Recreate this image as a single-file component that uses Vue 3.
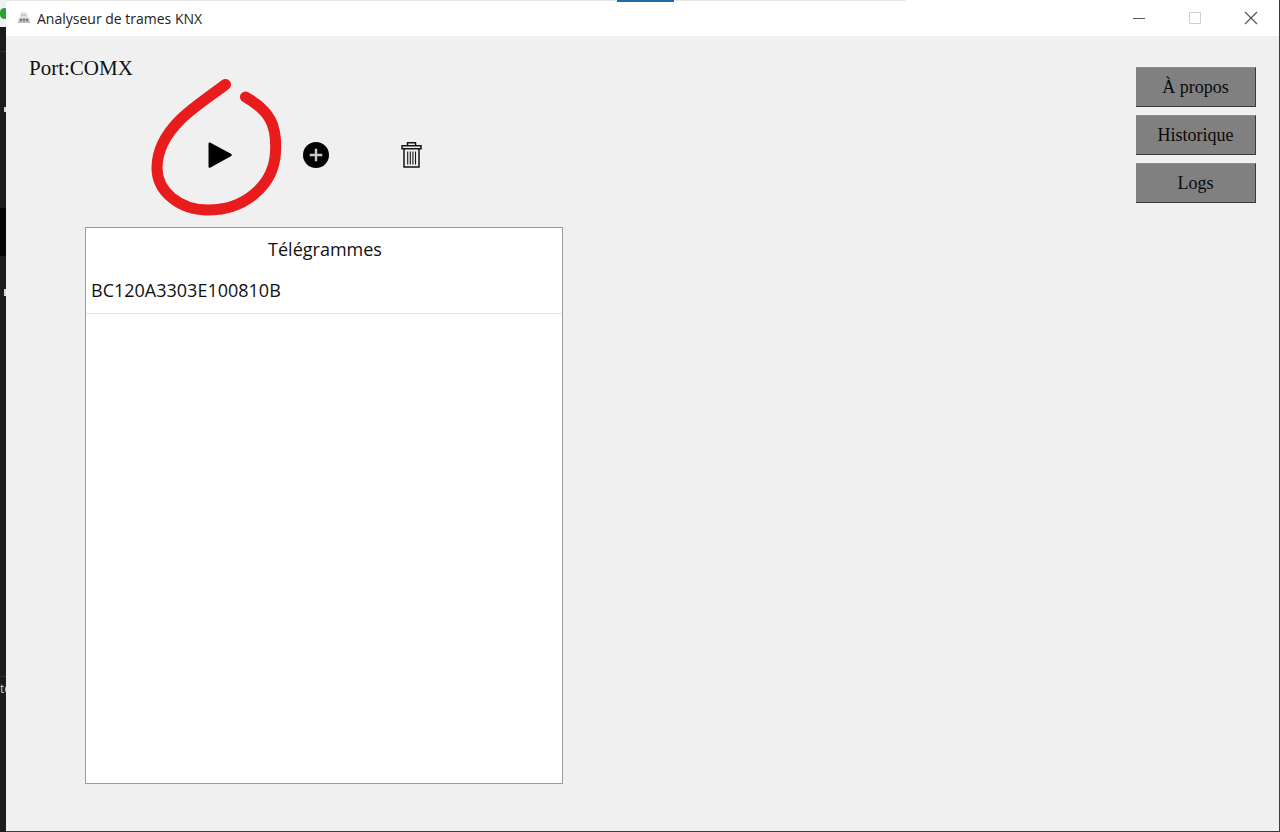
<script setup>
import { ref } from 'vue'

const port = ref('COMX')
const telegrams = ref(['BC120A3303E100810B'])
const menu = ['À propos', 'Historique', 'Logs']
</script>

<template>
  <div class="desktop">
    <div class="backdrop" aria-hidden="true">
      <i class="backdrop-top"></i>
      <i class="green-dot"></i>
      <i class="shade"></i>
      <i class="speck speck-a"></i>
      <i class="speck speck-b"></i>
      <i class="rule rule-a"></i>
      <i class="rule rule-b"></i>
      <span class="behind">to</span>
    </div>

    <main class="window">
      <header class="titlebar">
        <i class="tab-track"></i>
        <i class="tab-active"></i>
        <svg class="app-icon" viewBox="0 0 12 14" aria-hidden="true">
          <path d="M3 1h5l2 3v4H2V4z" fill="#dfe3e6" />
          <path d="M3 3h5v2H3z" fill="#c3c9ce" />
          <path d="M1 7h10l1 5H0z" fill="#b9bdc0" />
          <path d="M2 8h2v2H2zM5 8h2v2H5zM8 8h2v2H8z" fill="#74797d" />
        </svg>
        <h1 class="title">Analyseur de trames KNX</h1>
        <div class="controls">
          <button type="button" aria-label="Réduire">
            <svg viewBox="0 0 14 14"><path d="M1 7.500h12" stroke="#555" /></svg>
          </button>
          <button type="button" aria-label="Agrandir" disabled>
            <svg viewBox="0 0 14 14"><path d="M1.500 1.500h11v11h-11z" stroke="#cfcfcf" /></svg>
          </button>
          <button type="button" aria-label="Fermer">
            <svg viewBox="0 0 14 14"><path d="M1 1l12 12M13 1L1 13" stroke="#555" stroke-width="1.200" /></svg>
          </button>
        </div>
      </header>

      <div class="content">
        <section class="left">
          <p class="port">Port:{{ port }}</p>
          <div class="toolbar">
            <button type="button" aria-label="Démarrer">
              <svg viewBox="0 0 28 28">
                <path d="M4.500 1.700L25.300 13Q26.500 14 25.300 15L4.500 26.600Q2.500 27.300 2.500 25.500V3Q2.500 1 4.500 1.700z" fill="#000" />
              </svg>
            </button>
            <button type="button" aria-label="Ajouter">
              <svg viewBox="0 0 28 28">
                <circle cx="14" cy="14" r="13" fill="#000" />
                <path d="M14 7.700v12.600M7.700 14h12.600" stroke="#c9c9c9" stroke-width="2.400" />
              </svg>
            </button>
            <button type="button" aria-label="Supprimer">
              <svg viewBox="0 0 28 28" fill="none" stroke="#151515">
                <path d="M9.500 4V1.700h8V4" stroke-width="1.500" />
                <path d="M4 4.700h19v3H4z" stroke-width="1.500" />
                <path d="M6 7.700V26h15V7.700" stroke-width="1.500" />
                <path d="M9.700 10.500v13M12.300 10.500v13M14.900 10.500v13M17.500 10.500v13" stroke-width="1.100" />
              </svg>
            </button>
            <svg class="marker" viewBox="0 0 140 150" aria-hidden="true">
              <path
                d="M79.500 14.500C63 27 47 37 34 50C20 64 11 79 11 98C11 121 33 140 62 140C99 140 128 115 129.500 82C131 55 124 41 99.500 27"
                fill="none" stroke="#e81c1c" stroke-width="11" stroke-linecap="round" stroke-linejoin="round"
              />
            </svg>
          </div>
          <div class="list">
            <table>
              <thead>
                <tr><th scope="col">Télégrammes</th></tr>
              </thead>
              <tbody>
                <tr v-for="t in telegrams" :key="t"><td>{{ t }}</td></tr>
              </tbody>
            </table>
          </div>
        </section>
        <nav class="menu">
          <button v-for="m in menu" :key="m" type="button">{{ m }}</button>
        </nav>
      </div>
    </main>
  </div>
</template>

<style>
body {
  margin: 0;
}
</style>

<style scoped>
* {
  box-sizing: border-box;
}
.desktop {
  position: relative;
  display: flex;
  min-height: 100vh;
  padding: 0 1px 1px 6px;
  background: #3c3c3c;
}
.backdrop {
  position: absolute;
  inset: 0 auto 0 0;
  width: 6px;
  overflow: hidden;
  background: #1b1c1c;
}
.backdrop i,
.behind {
  position: absolute;
  left: 0;
  width: 6px;
}
.backdrop-top {
  top: 0;
  height: 27px;
  background: #f0f2f0;
}
.backdrop .green-dot {
  top: 8px;
  left: 0;
  width: 9px;
  height: 11px;
  border-radius: 5px;
  background: #28a12f;
}
.shade {
  top: 208px;
  height: 48px;
  background: #050505;
}
.backdrop .speck {
  left: 4px;
  width: 2px;
  background: #d5dadd;
}
.speck-a {
  top: 107px;
  height: 5px;
}
.speck-b {
  top: 289px;
  height: 7px;
}
.rule {
  height: 1px;
  background: #333;
}
.rule-a {
  top: 51px;
}
.rule-b {
  top: 676px;
}
.behind {
  top: 682px;
  font: 12px/14px "Open Sans", "Noto Sans", sans-serif;
  color: #ccc;
}
.window {
  position: relative;
  display: flex;
  flex: 1;
  flex-direction: column;
  background: #f0f0f0;
}
.titlebar {
  position: relative;
  display: flex;
  align-items: center;
  height: 36px;
  padding-left: 12px;
  background: #fff;
}
.tab-track,
.tab-active {
  position: absolute;
  top: 0;
}
.tab-track {
  left: 0;
  width: 900px;
  max-width: 100%;
  height: 1px;
  background: #e6e6e6;
}
.tab-active {
  left: 48%;
  width: 57px;
  height: 2px;
  background: #1c6ab0;
}
.app-icon {
  width: 12px;
  height: 14px;
}
.title {
  margin: 2px 0 0 7px;
  font: 400 14px/20px "Open Sans", "Noto Sans", sans-serif;
  color: #222;
}
.controls {
  display: flex;
  margin-left: auto;
}
.controls button {
  display: grid;
  place-items: center;
  width: 56px;
  height: 36px;
  padding: 0;
  border: 0;
  background: none;
}
.controls svg {
  width: 14px;
  height: 14px;
  fill: none;
}
.content {
  display: flex;
  flex: 1;
  justify-content: space-between;
  padding: 20px 23px 47px 23px;
}
.left {
  display: flex;
  flex: 0 1 534px;
  flex-direction: column;
}
.port {
  margin: 0;
  font: 21px/24px "Liberation Serif", serif;
  color: #111;
}
.toolbar {
  position: relative;
  display: flex;
  gap: 68px;
  margin: 61px 0 58px 177px;
}
.toolbar button {
  width: 28px;
  height: 28px;
  padding: 0;
  border: 0;
  background: none;
}
.toolbar button svg {
  display: block;
  width: 28px;
  height: 28px;
}
.marker {
  position: absolute;
  top: -71px;
  left: -60px;
  width: 140px;
  height: 150px;
  pointer-events: none;
}
.list {
  flex: 1;
  margin-left: 56px;
  border: 1px solid #9c9c9c;
  background: #fff;
}
table {
  width: 100%;
  border-collapse: collapse;
  font: 18px/26px "Open Sans", "Noto Sans", sans-serif;
  color: #111;
}
th {
  height: 42px;
  padding: 0 0 0 2px;
  font-weight: 400;
  text-align: center;
}
td {
  height: 43px;
  padding: 0 5px 2px;
  border-bottom: 1px solid #e6e6e6;
}
.menu {
  display: flex;
  flex-direction: column;
  gap: 8px;
  width: 120px;
  padding-top: 11px;
}
.menu button {
  height: 40px;
  padding: 0;
  border: solid #3a3a3a;
  border-width: 0 1px 1px 0;
  border-top: 1px solid #8e8e8e;
  background: #808080;
  font: 18px/24px "Liberation Serif", serif;
  color: #0a0a0a;
}
</style>
